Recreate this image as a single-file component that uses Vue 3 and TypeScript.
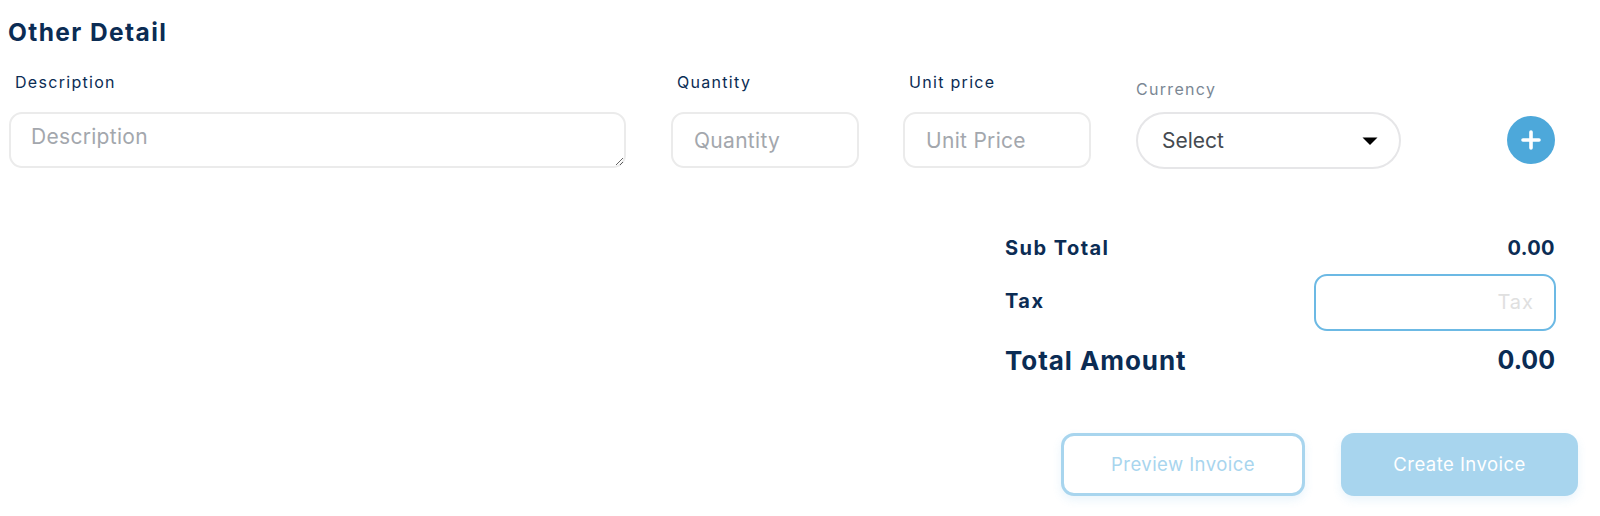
<script setup lang="ts">
const summary = { sub: '0.00', total: '0.00' }
</script>

<template>
  <main class="page">
    <h2 class="title">Other Detail</h2>
    <section class="line">
      <div class="field desc">
        <label class="label">Description</label>
        <textarea class="control area" placeholder="Description"></textarea>
      </div>
      <div class="field small">
        <label class="label">Quantity</label>
        <input class="control box" placeholder="Quantity" />
      </div>
      <div class="field small">
        <label class="label">Unit price</label>
        <input class="control box" placeholder="Unit Price" />
      </div>
      <div class="field currency">
        <label class="label muted">Currency</label>
        <div class="select">
          <span>Select</span>
          <svg width="16" height="8" viewBox="0 0 16 8"><path d="M0.5 0.5H15.5L8 8Z" fill="#000" /></svg>
        </div>
      </div>
      <button class="add" aria-label="Add">
        <svg width="20" height="20" viewBox="0 0 20 20"><path d="M10 2V18M2 10H18" stroke="#fff" stroke-width="3.6" stroke-linecap="round" /></svg>
      </button>
    </section>

    <section class="summary">
      <div class="row sub"><span class="name">Sub Total</span><span class="value">{{ summary.sub }}</span></div>
      <div class="row tax"><span class="name">Tax</span><input class="taxinput" placeholder="Tax" /></div>
      <div class="row total"><span class="name">Total Amount</span><span class="value">{{ summary.total }}</span></div>
    </section>

    <section class="actions">
      <button class="btn ghost">Preview Invoice</button>
      <button class="btn solid">Create Invoice</button>
    </section>
  </main>
</template>

<style>
html, body { margin: 0; background: #fff; }
</style>

<style scoped>
.page {
  width: 1600px;
  height: 516px;
  box-sizing: border-box;
  padding: 17px 0 0 8px;
  font-family: Inter, "Open Sans", sans-serif;
  color: #0b2c54;
  overflow: hidden;
}
.title {
  margin: 0;
  font-size: 24.5px;
  line-height: 30px;
  font-weight: 700;
  letter-spacing: 1.4px;
}
.line {
  display: flex;
  margin-top: 25px;
  align-items: flex-start;
}
.field { display: flex; flex-direction: column; }
.desc { width: 617px; margin-left: 1px; }
.small { width: 188px; margin-left: 45px; }
.small + .small { margin-left: 44px; }
.currency { width: 265px; margin-left: 45px; }
.label {
  box-sizing: border-box;
  height: 40px;
  padding-left: 6px;
  font-size: 16px;
  line-height: 20px;
  letter-spacing: 1.3px;
  color: #0b2c54;
}
.muted {
  padding: 7px 0 0;
  color: #7b8794;
}
.control {
  box-sizing: border-box;
  display: block;
  margin: 0;
  border: 2px solid #ebebeb;
  border-radius: 13px;
  background: #fff;
  font-family: inherit;
  font-size: 21px;
  letter-spacing: 0.3px;
  outline: none;
}
.control::placeholder { color: #a3a7ad; opacity: 1; }
.area {
  width: 617px;
  height: 56px;
  padding: 8px 20px;
  line-height: 30px;
  resize: both;
}
.box {
  width: 188px;
  height: 56px;
  padding: 0 21px;
}
.select {
  box-sizing: border-box;
  height: 57px;
  border: 2px solid #e6e6e8;
  border-radius: 29px;
  padding: 0 21px 0 24px;
  display: flex;
  align-items: center;
  justify-content: space-between;
  font-size: 21px;
  color: #454a50;
}
.add {
  width: 48px;
  height: 48px;
  margin: 44px 0 0 106px;
  border: 0;
  padding: 0;
  border-radius: 50%;
  background: #4da8da;
  display: flex;
  align-items: center;
  justify-content: center;
}
.summary {
  width: 550px;
  margin: 65px 0 0 997px;
  font-weight: 700;
}
.row {
  display: flex;
  justify-content: space-between;
  align-items: center;
}
.sub { font-size: 20px; height: 28px; }
.tax { font-size: 20px; height: 57px; margin-top: 12px; }
.name { letter-spacing: 1.45px; }
.tax .name { padding-bottom: 3px; }
.value { letter-spacing: 0.4px; }
.taxinput {
  box-sizing: border-box;
  width: 242px;
  height: 57px;
  margin: 0 -1px 0 0;
  border: 2px solid #6cb9e4;
  border-radius: 13px;
  padding: 0 20px 2px;
  text-align: right;
  font-family: inherit;
  font-size: 20px;
  letter-spacing: 1px;
  outline: none;
}
.taxinput::placeholder { color: #e0e0e0; opacity: 1; }
.total { font-size: 26px; height: 34px; margin-top: 12px; }
.total .name { letter-spacing: 0.95px; }
.total .value { letter-spacing: 0; font-size: 25px; }
.actions {
  display: flex;
  margin: 56px 0 0 1053px;
  gap: 36px;
}
.btn {
  box-sizing: border-box;
  height: 63px;
  padding: 0 0 2px;
  border-radius: 13px;
  font-family: inherit;
  font-size: 18.5px;
  font-weight: 400;
  letter-spacing: 0.45px;
  box-shadow: 0 4px 10px rgba(77, 168, 218, 0.12);
}
.ghost {
  width: 244px;
  background: #fff;
  border: 3px solid #a8d5ee;
  color: #a8d5ee;
}
.solid {
  width: 237px;
  background: #a8d5ee;
  border: 0;
  color: #fff;
}
</style>
